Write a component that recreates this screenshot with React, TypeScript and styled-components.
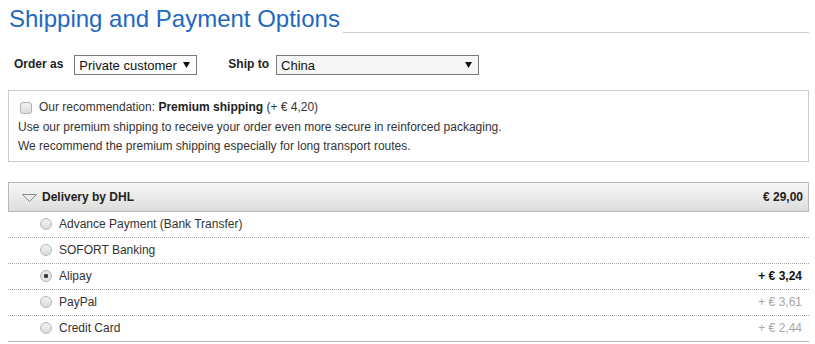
import styled, { createGlobalStyle } from 'styled-components';

const GlobalStyle = createGlobalStyle`
  html, body {
    margin: 0;
    padding: 0;
    background: #ffffff;
  }
  body {
    font-family: 'Liberation Sans', Arial, sans-serif;
    font-size: 12px;
    color: #333333;
  }
`;

type Payment = {
  name: string;
  price?: string;
  selected?: boolean;
  muted?: boolean;
};

const payments: Payment[] = [
  { name: 'Advance Payment (Bank Transfer)' },
  { name: 'SOFORT Banking' },
  { name: 'Alipay', price: '+ € 3,24', selected: true },
  { name: 'PayPal', price: '+ € 3,61', muted: true },
  { name: 'Credit Card', price: '+ € 2,44', muted: true },
];

const SelectArrow = () => (
  <svg width="7" height="6" viewBox="0 0 7 6">
    <path d="M0 0 H7 L3.5 6 Z" fill="#111" />
  </svg>
);

const Caret = () => (
  <svg width="15" height="8" viewBox="0 0 15 8">
    <path d="M0.5 0.5 H14.5 L7.5 7.5 Z" fill="none" stroke="#8a8a8a" strokeWidth="1" />
  </svg>
);

export default function App() {
  return (
    <Page>
      <GlobalStyle />
      <Header>
        <Title>Shipping and Payment Options</Title>
        <TitleRule />
      </Header>

      <OrderRow>
        <FieldLabel>Order as</FieldLabel>
        <FakeSelect $width={123}>
          <span>Private customer</span>
          <SelectArrow />
        </FakeSelect>
        <FieldLabel $gap={31}>Ship to</FieldLabel>
        <FakeSelect $width={203} $shade>
          <span>China</span>
          <SelectArrow />
        </FakeSelect>
      </OrderRow>

      <RecommendBox>
        <RecommendLine>
          <Checkbox />
          <span>
            Our recommendation: <strong>Premium shipping</strong> (+ € 4,20)
          </span>
        </RecommendLine>
        <Para>Use our premium shipping to receive your order even more secure in reinforced packaging.</Para>
        <Para>We recommend the premium shipping especially for long transport routes.</Para>
      </RecommendBox>

      <Delivery>
        <DeliveryHead>
          <HeadTitle>
            <Caret />
            <span>Delivery by DHL</span>
          </HeadTitle>
          <HeadPrice>€ 29,00</HeadPrice>
        </DeliveryHead>
        <PaymentList>
          {payments.map((p) => (
            <PaymentRow key={p.name}>
              <PaymentName>
                <Radio $checked={!!p.selected} />
                <span>{p.name}</span>
              </PaymentName>
              {p.price && <Price $muted={!!p.muted}>{p.price}</Price>}
            </PaymentRow>
          ))}
        </PaymentList>
      </Delivery>
    </Page>
  );
}

const Page = styled.div`
  padding: 0 6px 0 8px;
`;

const Header = styled.div`
  display: flex;
  align-items: flex-end;
  padding-top: 4px;
`;

const Title = styled.h1`
  margin: 0 0 0 1px;
  font-size: 24px;
  line-height: 29px;
  font-weight: normal;
  color: #1f68c1;
  white-space: nowrap;
`;

const TitleRule = styled.div`
  flex: 1;
  height: 1px;
  margin-left: 3px;
  background: #cfcfcf;
`;

const OrderRow = styled.div`
  display: flex;
  align-items: center;
  height: 20px;
  margin-top: 22px;
  padding-left: 6px;
`;

const FieldLabel = styled.label<{ $gap?: number }>`
  font-size: 12px;
  font-weight: bold;
  color: #222;
  margin-left: ${(p) => p.$gap ?? 0}px;
  margin-right: ${(p) => (p.$gap ? 7 : 11)}px;
  position: relative;
  top: -1px;
`;

const FakeSelect = styled.div<{ $width: number; $shade?: boolean }>`
  box-sizing: border-box;
  width: ${(p) => p.$width}px;
  height: 20px;
  border: 1px solid #7a7a7a;
  background: ${(p) => (p.$shade ? '#f6f6f6' : '#fdfdfd')};
  display: flex;
  align-items: center;
  justify-content: space-between;
  padding: 0 6px 0 4px;
  font-size: 13px;
  color: #111;
`;

const RecommendBox = styled.div`
  margin-top: 15px;
  border: 1px solid #cccccc;
  padding: 7px 9px 4px 9px;
  line-height: 19.5px;
`;

const RecommendLine = styled.div`
  display: flex;
  align-items: center;
  gap: 7px;
  strong {
    color: #222;
  }
`;

const Checkbox = styled.span`
  box-sizing: border-box;
  width: 12px;
  height: 12px;
  margin-left: 2px;
  border: 1px solid #b0b0b0;
  border-radius: 3px;
  background: linear-gradient(#f2f2f2, #dcdcdc);
`;

const Para = styled.div``;

const Delivery = styled.div`
  margin-top: 20px;
`;

const DeliveryHead = styled.div`
  box-sizing: border-box;
  height: 30px;
  border: 1px solid #b8b8b8;
  background: linear-gradient(#f7f7f7, #dddddd);
  display: flex;
  align-items: center;
  justify-content: space-between;
  padding: 0 5px 0 13px;
  font-weight: bold;
  color: #222;
`;

const HeadTitle = styled.div`
  display: flex;
  align-items: center;
  gap: 5px;
  svg {
    position: relative;
    top: 1px;
  }
`;

const HeadPrice = styled.span``;

const PaymentList = styled.div`
  border-bottom: 1px solid #b5b5b5;
`;

const PaymentRow = styled.div`
  box-sizing: border-box;
  height: 26px;
  display: flex;
  align-items: center;
  justify-content: space-between;
  padding: 0 7px 0 32px;
  border-bottom: 1px dotted #a8a8a8;
  &:last-child {
    border-bottom: none;
    height: 25px;
  }
`;

const PaymentName = styled.div`
  display: flex;
  align-items: center;
  gap: 7px;
`;

const Radio = styled.span<{ $checked: boolean }>`
  box-sizing: border-box;
  width: 12px;
  height: 12px;
  border-radius: 50%;
  border: 1px solid #b8b8b8;
  background: ${(p) =>
    p.$checked
      ? 'radial-gradient(circle, #333 0, #444 2px, #e6e6e6 2.5px, #dcdcdc 100%)'
      : 'linear-gradient(#f2f2f2, #dadada)'};
`;

const Price = styled.span<{ $muted: boolean }>`
  font-weight: ${(p) => (p.$muted ? 'normal' : 'bold')};
  color: ${(p) => (p.$muted ? '#a6a6a6' : '#111')};
`;
